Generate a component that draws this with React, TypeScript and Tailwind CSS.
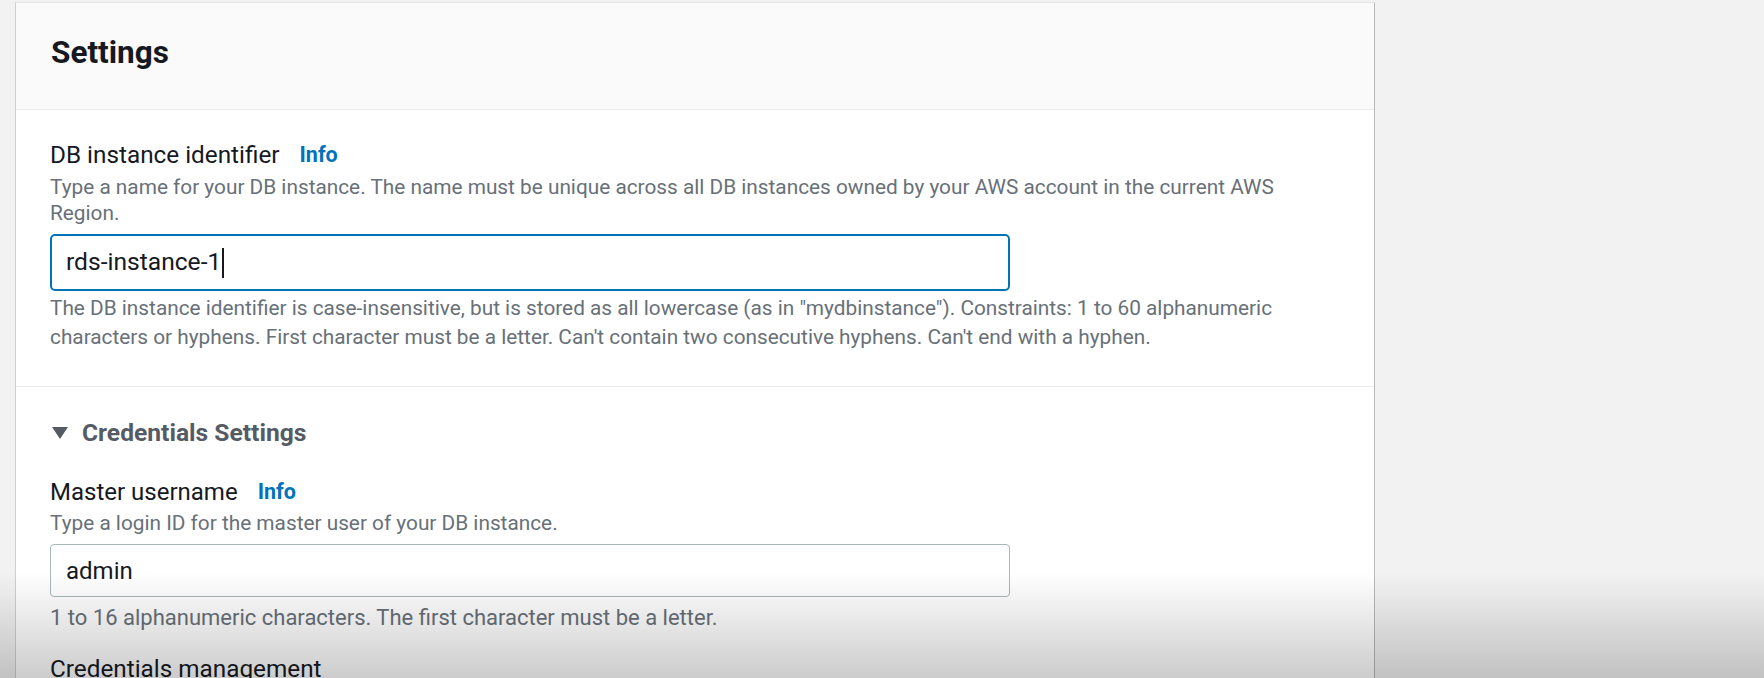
const Info = () => (
  <span className="ml-[20px] text-[21.5px] font-bold text-[#0073bb]">Info</span>
);

const Caret = () => (
  <svg width="16" height="12" viewBox="0 0 16 12" className="mr-[14px] shrink-0">
    <polygon points="0,0 16,0 8,12" fill="#545b64" />
  </svg>
);

export default function App() {
  return (
    <div
      className="relative h-[678px] w-[1764px] overflow-hidden bg-[#f2f2f2] pl-[15px] pt-[2px]"
      style={{ fontFamily: 'Roboto, "Liberation Sans", sans-serif' }}
    >
      <div className="h-[700px] w-[1360px] border-l border-r border-t border-l-[#cfcfcf] border-r-[#b9b9b9] border-t-[#e4e4e4] bg-white">
        <div className="flex h-[107px] items-center border-b border-[#eaeded] bg-[#fafafa] pb-[6px] pl-[35px]">
          <h2 className="text-[31.5px] font-bold text-[#16191f]">Settings</h2>
        </div>

        <div className="pl-[34px] pt-[31px]">
          <div className="flex items-center text-[24.3px] leading-[28px] text-[#16191f]">
            DB instance identifier
            <Info />
          </div>
          <p className="mt-[5px] w-[1245px] text-[20.8px] leading-[26px] text-[#687078]">
            Type a name for your DB instance. The name must be unique across all DB instances owned by your AWS account in the current AWS Region.
          </p>
          <div className="mt-[8px] flex h-[57px] w-[960px] items-center rounded-[5px] border-2 border-[#0073bb] pl-[14px] text-[24.6px] text-[#16191f]">
            rds-instance-1
            <span className="ml-[1px] h-[30px] w-[2px] bg-[#16191f]" />
          </div>
          <p className="mt-[3px] w-[1245px] text-[20.8px] leading-[29px] text-[#687078]">
            The DB instance identifier is case-insensitive, but is stored as all lowercase (as in "mydbinstance"). Constraints: 1 to 60 alphanumeric characters or hyphens. First character must be a letter. Can't contain two consecutive hyphens. Can't end with a hyphen.
          </p>
        </div>

        <div className="mt-[34px] border-t border-[#eaeded] pl-[36px] pt-[31px]">
          <div className="flex items-center text-[24.6px] font-bold leading-[30px] text-[#545b64]">
            <Caret />
            Credentials Settings
          </div>
        </div>
        <div className="pl-[34px]">
          <div className="mt-[30px] flex items-center text-[24px] leading-[28px] text-[#16191f]">
            Master username
            <Info />
          </div>
          <p className="mt-[4px] text-[20.8px] leading-[26px] text-[#687078]">
            Type a login ID for the master user of your DB instance.
          </p>
          <div className="mt-[8px] flex h-[53px] w-[960px] items-center rounded-[4px] border border-[#aab7b8] pl-[15px] text-[24px] text-[#16191f]">
            admin
          </div>
          <p className="mt-[8px] text-[22px] leading-[26px] text-[#687078]">
            1 to 16 alphanumeric characters. The first character must be a letter.
          </p>
          <div className="mt-[24px] text-[24.3px] leading-[28px] text-[#16191f]">Credentials management</div>
        </div>
      </div>
      <div className="pointer-events-none absolute bottom-0 left-0 h-[105px] w-full bg-gradient-to-b from-transparent to-black/20" />
    </div>
  );
}
